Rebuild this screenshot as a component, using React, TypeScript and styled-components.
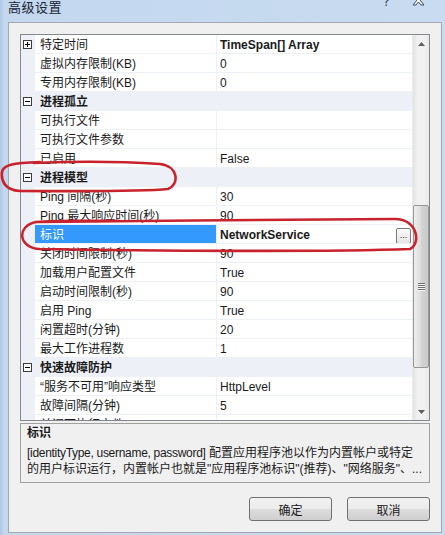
import styled, { createGlobalStyle } from 'styled-components';

const GlobalStyle = createGlobalStyle`
  html, body {
    margin: 0;
    padding: 0;
    background: #c5d9f0;
  }
  * {
    box-sizing: border-box;
  }
`;

const FONT = `"Liberation Sans", "Noto Sans CJK SC", sans-serif`;

type PropRow = {
  kind: 'prop';
  name: string;
  value: string;
  bold?: boolean;
  selected?: boolean;
  button?: boolean;
  expandable?: boolean;
};
type CatRow = { kind: 'cat'; label: string };
type Row = PropRow | CatRow;

const rows: Row[] = [
  { kind: 'prop', name: '特定时间', value: 'TimeSpan[] Array', bold: true, expandable: true },
  { kind: 'prop', name: '虚拟内存限制(KB)', value: '0' },
  { kind: 'prop', name: '专用内存限制(KB)', value: '0' },
  { kind: 'cat', label: '进程孤立' },
  { kind: 'prop', name: '可执行文件', value: '' },
  { kind: 'prop', name: '可执行文件参数', value: '' },
  { kind: 'prop', name: '已启用', value: 'False' },
  { kind: 'cat', label: '进程模型' },
  { kind: 'prop', name: 'Ping 间隔(秒)', value: '30' },
  { kind: 'prop', name: 'Ping 最大响应时间(秒)', value: '90' },
  { kind: 'prop', name: '标识', value: 'NetworkService', bold: true, selected: true, button: true },
  { kind: 'prop', name: '关闭时间限制(秒)', value: '90' },
  { kind: 'prop', name: '加载用户配置文件', value: 'True' },
  { kind: 'prop', name: '启动时间限制(秒)', value: '90' },
  { kind: 'prop', name: '启用 Ping', value: 'True' },
  { kind: 'prop', name: '闲置超时(分钟)', value: '20' },
  { kind: 'prop', name: '最大工作进程数', value: '1' },
  { kind: 'cat', label: '快速故障防护' },
  { kind: 'prop', name: '“服务不可用”响应类型', value: 'HttpLevel' },
  { kind: 'prop', name: '故障间隔(分钟)', value: '5' },
  { kind: 'prop', name: '关闭可执行文件', value: '' },
];

const LINE = '#edf1f7';

const Window = styled.div`
  position: relative;
  width: 445px;
  height: 535px;
  display: flex;
  flex-direction: column;
  padding: 0 3px 3px 8px;
  background: linear-gradient(90deg, #aec6e3 0px, #c3d7ee 4px, #c8dbf1 100%);
  font-family: ${FONT};
  font-size: 12px;
  color: #111;
  overflow: hidden;
`;

const TitleBar = styled.div`
  height: 22px;
  flex-shrink: 0;
  display: flex;
  align-items: flex-start;
  justify-content: space-between;
`;

const TitleText = styled.div`
  font-size: 13px;
  line-height: 17px;
  color: #1b2533;
  margin-top: -1px;
  letter-spacing: 0.5px;
`;

const TitleButtons = styled.div`
  display: flex;
  align-items: flex-start;
  gap: 22px;
  margin-top: -5px;
  margin-right: 17px;
`;

const HelpGlyph = styled.span`
  font-family: "DejaVu Sans", sans-serif;
  font-size: 13px;
  line-height: 14px;
  color: #3b4a5e;
`;

const Client = styled.div`
  flex: 1;
  display: flex;
  flex-direction: column;
  background: #f0f0f0;
  border: 1px solid #a3a8ae;
  padding: 11px;
`;

const Grid = styled.div`
  height: 387px;
  flex-shrink: 0;
  display: flex;
  border: 1px solid #828790;
  background: #fff;
`;

const RowsArea = styled.div`
  flex: 1;
  overflow: hidden;
`;

const RowLine = styled.div<{ $cat?: boolean }>`
  height: 19px;
  display: flex;
  border-bottom: 1px solid ${LINE};
  background: ${(p) => (p.$cat ? LINE : '#fff')};
  line-height: 18px;
  white-space: nowrap;
`;

const Gutter = styled.div`
  width: 14px;
  flex-shrink: 0;
  background: ${LINE};
  display: flex;
  align-items: center;
  padding-left: 2px;
`;

const ToggleBox = styled.span`
  width: 9px;
  height: 9px;
  border: 1px solid #3c3c3c;
  background: #fff;
  position: relative;
  display: block;
  margin-top: 1px;

  &::before {
    content: '';
    position: absolute;
    left: 1px;
    top: 3px;
    width: 5px;
    height: 1px;
    background: #000;
  }
`;

const PlusBox = styled(ToggleBox)`
  &::after {
    content: '';
    position: absolute;
    left: 3px;
    top: 1px;
    width: 1px;
    height: 5px;
    background: #000;
  }
`;

const NameCell = styled.div<{ $selected?: boolean }>`
  width: 182px;
  flex-shrink: 0;
  padding: 1px 0 0 5px;
  border-right: 1px solid ${LINE};
  background: ${(p) => (p.$selected ? '#3399ff' : 'transparent')};
  color: ${(p) => (p.$selected ? '#fff' : '#1a1a1a')};
  overflow: hidden;
`;

const ValueCell = styled.div<{ $bold?: boolean }>`
  flex: 1;
  display: flex;
  align-items: flex-start;
  justify-content: space-between;
  padding: 1px 1px 0 3px;
  font-weight: ${(p) => (p.$bold ? 700 : 400)};
  color: #1a1a1a;
  overflow: hidden;
`;

const CatLabel = styled.div`
  padding: 1px 0 0 5px;
  font-weight: 700;
  color: #1a1a1a;
`;

const EllipsisButton = styled.div`
  width: 15px;
  height: 16px;
  margin-top: 2px;
  border: 1px solid #7a7a7a;
  border-radius: 2px;
  background: linear-gradient(#fbfbfb, #e6e6e6);
  font-size: 9px;
  font-weight: 400;
  line-height: 12px;
  text-align: center;
  color: #222;
`;

const ScrollBar = styled.div`
  width: 17px;
  flex-shrink: 0;
  display: flex;
  flex-direction: column;
  background: linear-gradient(90deg, #e3e3e3, #f1f1f1 30%, #f1f1f1 70%, #e9e9e9);
  border-left: 1px solid #eaeaea;
`;

const ArrowButton = styled.div`
  height: 17px;
  display: flex;
  align-items: center;
  justify-content: center;
`;

const Track = styled.div<{ $offset: number }>`
  flex: 1;
  padding-top: ${(p) => p.$offset}px;
`;

const Thumb = styled.div<{ $size: number }>`
  height: ${(p) => p.$size}px;
  border: 1px solid #979797;
  border-radius: 2px;
  background: linear-gradient(90deg, #eeeeee, #dedede 45%, #d2d2d2 55%, #cbcbcb);
  display: flex;
  align-items: center;
  justify-content: center;
`;

const Grip = styled.div`
  width: 7px;
  display: flex;
  flex-direction: column;
  gap: 1px;

  & > span {
    display: block;
    height: 1px;
    background: #6f6f6f;
    box-shadow: 0 1px 0 #f6f6f6;
  }
`;

const Description = styled.div`
  margin-top: 2px;
  height: 60px;
  flex-shrink: 0;
  border: 1px solid #a0a0a0;
  background: #f0f0f0;
  padding: 0 6px;
  overflow: hidden;
`;

const DescTitle = styled.div`
  font-weight: 700;
  line-height: 18px;
  margin-bottom: 3px;
  color: #1a1a1a;
`;

const DescLine = styled.div`
  line-height: 16px;
  white-space: nowrap;
  color: #1a1a1a;
`;

const DescLatin = styled.span`
  letter-spacing: -0.3px;
`;

const ButtonRow = styled.div`
  margin-top: 14px;
  display: flex;
  justify-content: flex-end;
  gap: 15px;
`;

const DialogButton = styled.button`
  width: 83px;
  height: 24px;
  border: 1px solid #707070;
  border-radius: 3px;
  background: linear-gradient(#f2f2f2 0%, #ebebeb 50%, #dddddd 51%, #cfcfcf 100%);
  font-family: ${FONT};
  font-size: 12px;
  color: #1a1a1a;
  padding: 0;
`;

const Annotations = styled.svg`
  position: absolute;
  left: 0;
  top: 0;
  pointer-events: none;
`;

function ArrowUp() {
  return (
    <svg width="7" height="4" viewBox="0 0 7 4">
      <path d="M0 4 L3.5 0 L7 4 Z" fill="#606060" />
    </svg>
  );
}

function ArrowDown() {
  return (
    <svg width="7" height="4" viewBox="0 0 7 4">
      <path d="M0 0 L7 0 L3.5 4 Z" fill="#606060" />
    </svg>
  );
}

function CloseGlyph() {
  return (
    <svg width="13" height="11" viewBox="0 0 13 11">
      <path
        d="M1 0 L4 0 L6.5 3 L9 0 L12 0 L8 5 L12 10 L9 10 L6.5 7 L4 10 L1 10 L5 5 Z"
        fill="#ffffff"
        stroke="#3b4a5e"
        strokeWidth="1"
        strokeLinejoin="round"
      />
    </svg>
  );
}

export default function App() {
  return (
    <>
      <GlobalStyle />
      <Window>
        <TitleBar>
          <TitleText>高级设置</TitleText>
          <TitleButtons>
            <HelpGlyph>?</HelpGlyph>
            <CloseGlyph />
          </TitleButtons>
        </TitleBar>
        <Client>
          <Grid>
            <RowsArea>
              {rows.map((row, i) =>
                row.kind === 'cat' ? (
                  <RowLine key={i} $cat>
                    <Gutter>
                      <ToggleBox />
                    </Gutter>
                    <CatLabel>{row.label}</CatLabel>
                  </RowLine>
                ) : (
                  <RowLine key={i}>
                    <Gutter>{row.expandable && <PlusBox />}</Gutter>
                    <NameCell $selected={row.selected}>{row.name}</NameCell>
                    <ValueCell $bold={row.bold}>
                      <span>{row.value}</span>
                      {row.button && <EllipsisButton>...</EllipsisButton>}
                    </ValueCell>
                  </RowLine>
                )
              )}
            </RowsArea>
            <ScrollBar>
              <ArrowButton>
                <ArrowUp />
              </ArrowButton>
              <Track $offset={153}>
                <Thumb $size={163}>
                  <Grip>
                    <span />
                    <span />
                    <span />
                    <span />
                  </Grip>
                </Thumb>
              </Track>
              <ArrowButton>
                <ArrowDown />
              </ArrowButton>
            </ScrollBar>
          </Grid>
          <Description>
            <DescTitle>标识</DescTitle>
            <DescLine>
              <DescLatin>[identityType, username, password]</DescLatin> 配置应用程序池以作为内置帐户或特定
            </DescLine>
            <DescLine>的用户标识运行，内置帐户也就是"应用程序池标识"(推荐)、"网络服务"、...</DescLine>
          </Description>
          <ButtonRow>
            <DialogButton>确定</DialogButton>
            <DialogButton>取消</DialogButton>
          </ButtonRow>
        </Client>
        <Annotations width="445" height="535" viewBox="0 0 445 535">
          <path
            d="M34 163 C80 161 130 162 160 164 C178 166 180 184 168 189 C140 192 70 191 20 191 C4 190 1 180 2 172 C3 165 12 163 40 162"
            fill="none"
            stroke="#c8232c"
            strokeWidth="2.6"
            strokeLinecap="round"
          />
          <path
            d="M40 222 C150 221 300 219 395 219 C418 219 421 244 410 249 C330 252 150 251 40 249 C18 248 16 226 36 222 C60 220 90 221 120 221"
            fill="none"
            stroke="#c8232c"
            strokeWidth="2.6"
            strokeLinecap="round"
          />
        </Annotations>
      </Window>
    </>
  );
}
